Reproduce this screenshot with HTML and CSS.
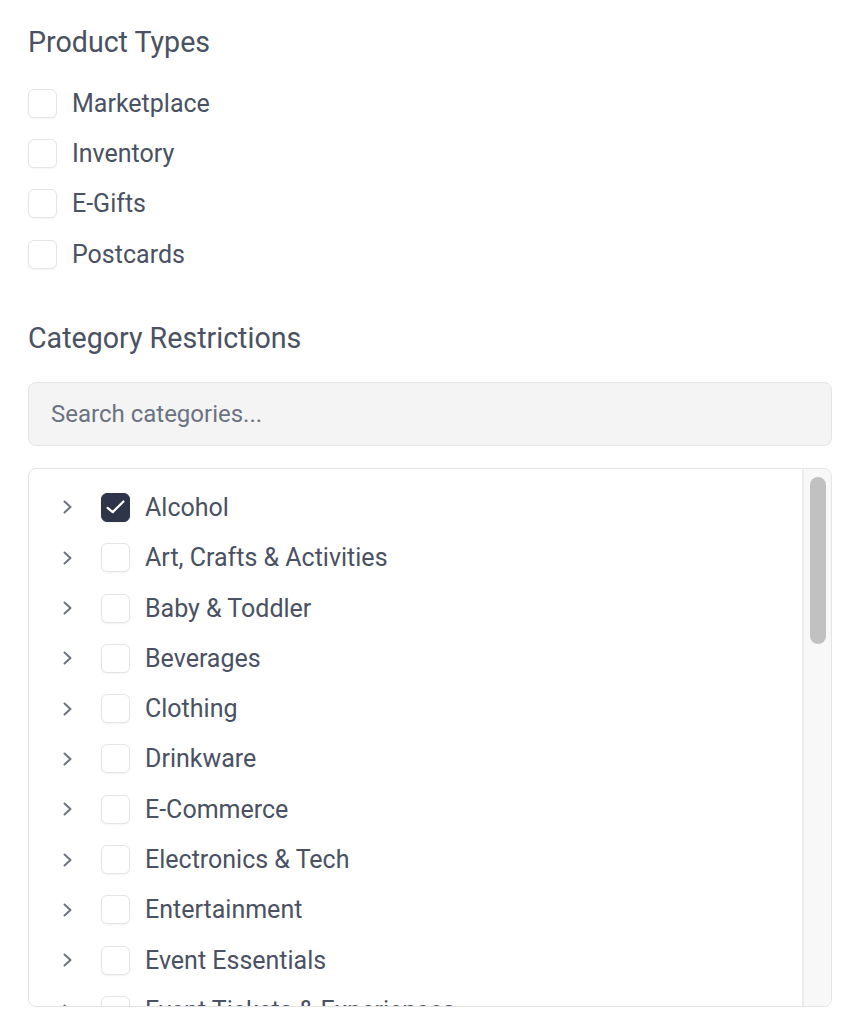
FILE: index.html
```html
<!DOCTYPE html>
<html>
<head>
    <title>Product Filters</title>
    <link rel="stylesheet" href="styles.css">
</head>
<body>
    <div class="panel">
        <h2 class="section-title">Product Types</h2>
        <div class="type-list">
            <label class="option"><span class="box"></span>Marketplace</label>
            <label class="option"><span class="box"></span>Inventory</label>
            <label class="option"><span class="box"></span>E-Gifts</label>
            <label class="option"><span class="box"></span>Postcards</label>
        </div>

        <h2 class="section-title title-gap">Category Restrictions</h2>
        <input class="search" type="text" placeholder="Search categories...">

        <div class="tree">
            <div class="tree-list" id="tree"></div>
            <div class="scrollbar"><div class="thumb"></div></div>
        </div>
    </div>

    <script>
        const categories = [
            'Alcohol', 'Art, Crafts & Activities', 'Baby & Toddler', 'Beverages',
            'Clothing', 'Drinkware', 'E-Commerce', 'Electronics & Tech',
            'Entertainment', 'Event Essentials', 'Event Tickets & Experiences'
        ];
        const checked = ['Alcohol'];

        const chevron = '<svg class="chev" width="12" height="14" viewBox="0 0 12 14"><path d="M2.5 1.5 L8.5 7 L2.5 12.5" fill="none" stroke="#6b7280" stroke-width="2" stroke-linecap="round" stroke-linejoin="round"/></svg>';
        const tick = '<svg width="29" height="29" viewBox="0 0 29 29"><path d="M6 15 L11.5 19.5 L23 8" fill="none" stroke="#fff" stroke-width="2.4" stroke-linecap="round" stroke-linejoin="round"/></svg>';

        const tree = document.getElementById('tree');
        categories.forEach(function (name) {
            const row = document.createElement('div');
            row.className = 'tree-row';
            const on = checked.indexOf(name) !== -1;
            row.innerHTML = '<span class="toggle">' + chevron + '</span>' +
                '<span class="box' + (on ? ' checked' : '') + '">' + (on ? tick : '') + '</span>' +
                '<span class="name"></span>';
            row.querySelector('.name').textContent = name;
            tree.appendChild(row);
        });
    </script>
</body>
</html>
```

FILE: styles.css
```css
body {
    margin: 0;
    background-color: #fff;
    font-family: Roboto, "Liberation Sans", Arial, sans-serif;
    color: #4a5162;
}
.panel {
    padding: 24px 10px 0 28px;
}
.section-title {
    margin: 0;
    font-size: 28.6px;
    line-height: 36px;
    font-weight: 400;
    color: #4a5162;
}
.title-gap {
    margin-top: 41px;
}
.type-list {
    margin-top: 18px;
}
.option {
    display: flex;
    align-items: center;
    gap: 15px;
    height: 50.3px;
    font-size: 25px;
}
.box {
    flex: none;
    box-sizing: border-box;
    width: 29px;
    height: 29px;
    border: 1px solid #e3e5e9;
    border-radius: 6px;
    background-color: #fff;
    box-shadow: 0 1px 2px rgba(0, 0, 0, 0.05);
    display: flex;
    align-items: center;
    justify-content: center;
}
.box.checked {
    background-color: #2f3548;
    border-color: #2f3548;
}
.search {
    display: block;
    box-sizing: border-box;
    width: 804px;
    height: 64px;
    margin-top: 26px;
    padding: 0 22px;
    border: 1px solid #e4e4e7;
    border-radius: 8px;
    background-color: #f4f4f5;
    font-family: inherit;
    font-size: 24px;
    color: #4b5563;
    outline: none;
}
.search::placeholder {
    color: #6b7280;
}
.tree {
    display: flex;
    box-sizing: border-box;
    width: 804px;
    height: 539px;
    margin-top: 22px;
    border: 1px solid #e4e4e7;
    border-radius: 8px;
    overflow: hidden;
}
.tree-list {
    flex: 1;
    padding-top: 13px;
    overflow: hidden;
}
.scrollbar {
    flex: none;
    box-sizing: border-box;
    width: 29px;
    background-color: #f8f8f8;
    border-left: 2px solid #ececec;
    padding: 8px 5px 0 6px;
}
.thumb {
    height: 167px;
    border-radius: 8px;
    background-color: #c1c1c1;
}
.tree-row {
    display: flex;
    align-items: center;
    height: 50.33px;
    padding-left: 33px;
    font-size: 25px;
    white-space: nowrap;
}
.toggle {
    width: 12px;
    display: flex;
    margin-right: 27px;
}
.chev {
    display: block;
}
.tree-row .box {
    margin-right: 15px;
}
```
